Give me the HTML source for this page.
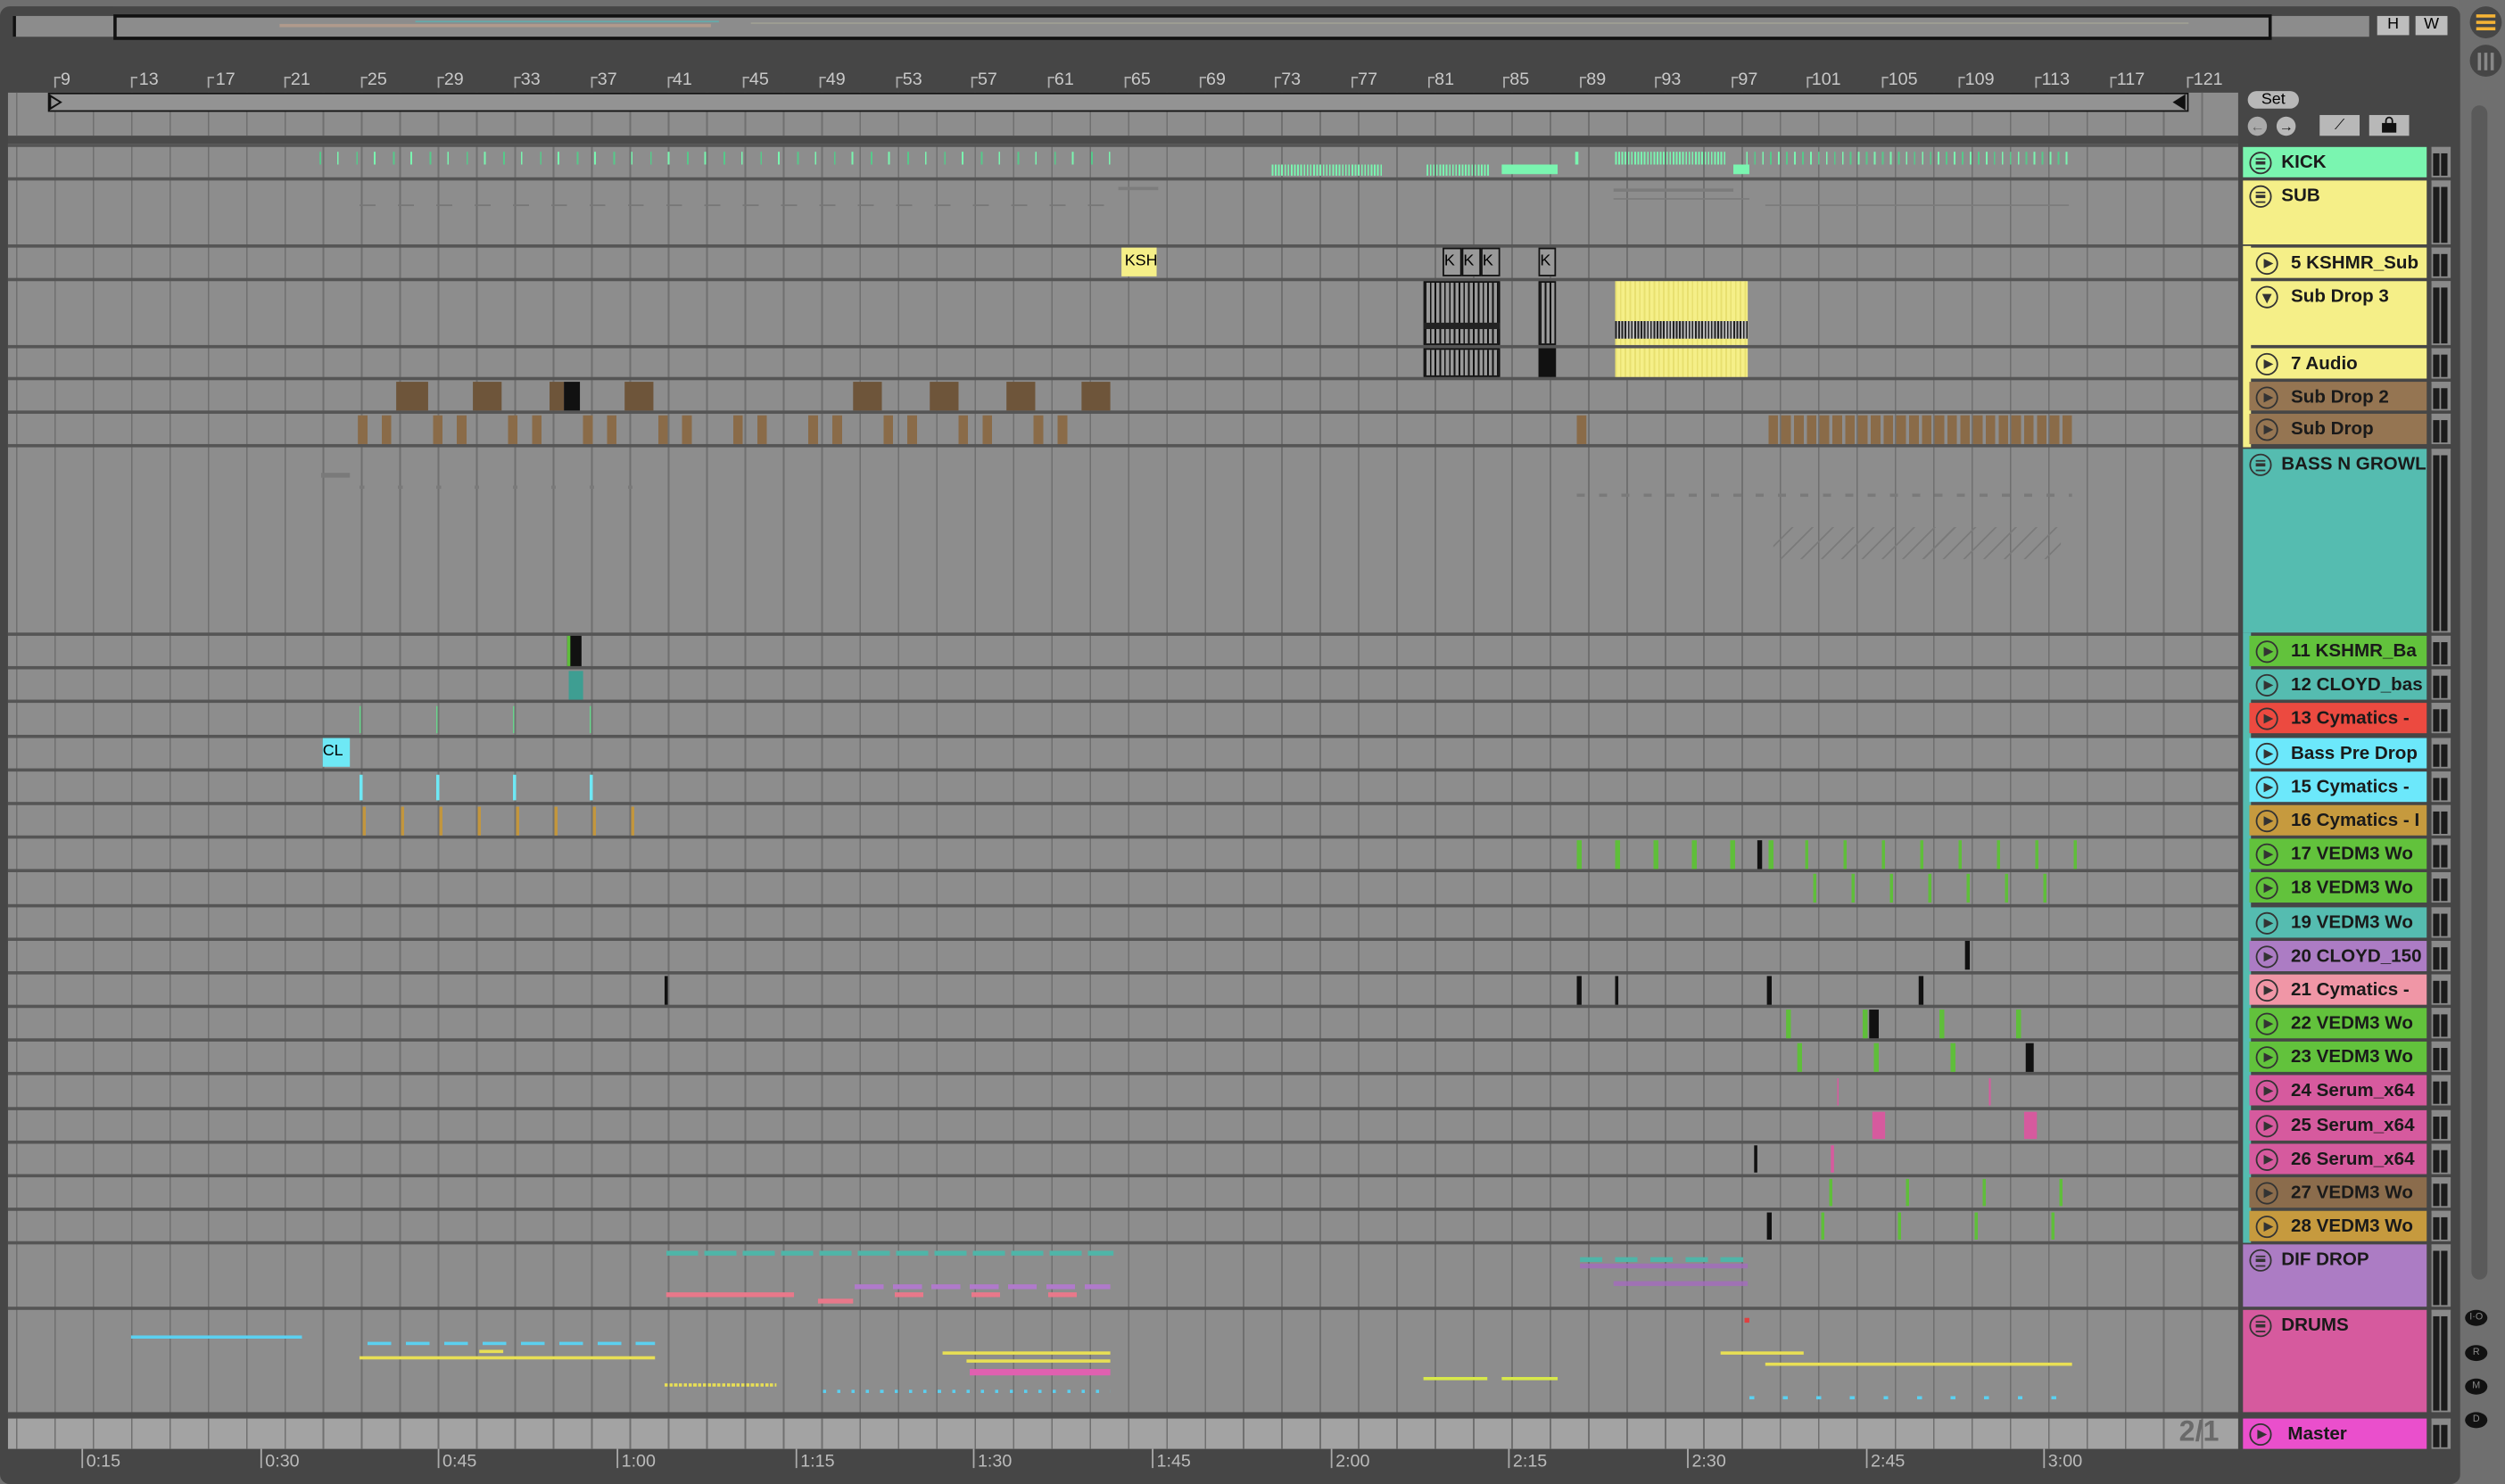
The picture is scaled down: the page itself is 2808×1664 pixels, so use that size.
<!DOCTYPE html>
<html><head><meta charset="utf-8"><style>
*{margin:0;padding:0;box-sizing:border-box}
html,body{width:2808px;height:1664px;overflow:hidden;background:#6f6f6f;font-family:"Liberation Sans",sans-serif}
#w{position:absolute;left:0;top:0;width:1568px;height:929px;transform:scale(1.7908,1.7912);transform-origin:0 0}
.a{position:absolute}
.panel{left:0;top:4px;width:1540px;height:925px;background:#464646;border-radius:6px}
.lane{position:absolute;left:5px;width:1396px;background-color:#8d8d8d;background-image:repeating-linear-gradient(90deg,transparent 0 5px,#707070 5px 6px,transparent 6px 24px)}
.sep{position:absolute;left:5px;width:1396px;height:2px;background:#555}
.hd{position:absolute;left:1408px;width:111px;font-size:11.5px;font-weight:bold;color:#1a1a1a;padding-left:26px;line-height:20px;white-space:nowrap;overflow:hidden}
.hd.g{left:1404px;width:115px;padding-left:24px}
.hd i{position:absolute;left:4px;top:3px;width:14px;height:14px;border:1.3px solid #333;border-radius:50%}
.hd i.p:after{content:"";position:absolute;left:4px;top:2.5px;border-left:6px solid #333;border-top:3.5px solid transparent;border-bottom:3.5px solid transparent}
.hd i.d:after{content:"";position:absolute;left:2.5px;top:4px;border-top:6px solid #333;border-left:3.5px solid transparent;border-right:3.5px solid transparent}
.hd i.m:after{content:"";position:absolute;left:3px;top:3px;width:6px;height:5px;border-top:1.3px solid #333;border-bottom:1.3px solid #333}
.hd i.m:before{content:"";position:absolute;left:3px;top:5.3px;width:6px;height:1.3px;background:#333}
.mt{position:absolute;left:1522px;width:12px;background:#8a8a8a;border-top:1px solid #8a8a8a}
.mt:before,.mt:after{content:"";position:absolute;top:3px;bottom:1px;width:4px;background:#1b1b1b}
.mt:before{left:1px}.mt:after{left:6px}
.c{position:absolute}
.rn{position:absolute;top:44px;font-size:11px;color:#c8c8c8}
.tk{position:absolute;top:48px;width:4px;height:7px;border-left:1px solid #aaa;border-top:1px solid #aaa}
.tl{position:absolute;top:909px;font-size:11px;color:#bbb}
.tt{position:absolute;top:907px;width:4px;height:12px;border-left:1px solid #aaa}
</style></head><body><div id="w">
<div class="a panel"></div>
<div class="a" style="left:1540px;top:0;width:28px;height:929px;background:#6f6f6f"></div>
<div class="a" style="left:1546px;top:4px;width:20px;height:20px;border-radius:50%;background:#464646"></div>
<div class="a" style="left:1550px;top:9px;width:12px;height:2px;background:#f5b335;box-shadow:0 4px 0 #f5b335,0 8px 0 #f5b335"></div>
<div class="a" style="left:1546px;top:28px;width:20px;height:20px;border-radius:50%;background:#464646"></div>
<div class="a" style="left:1551px;top:33px;width:2px;height:11px;background:#888;box-shadow:4px 0 0 #888,8px 0 0 #888"></div>
<div class="a" style="left:1547px;top:66px;width:10px;height:735px;background:#5a5a5a;border-radius:5px"></div>
<div class="a" style="left:1543px;top:820px;width:14px;height:10px;border-radius:50%;background:#111;color:#888;font-size:6px;text-align:center;line-height:10px">I·O</div>
<div class="a" style="left:1543px;top:842px;width:14px;height:10px;border-radius:50%;background:#111;color:#888;font-size:6px;text-align:center;line-height:10px">R</div>
<div class="a" style="left:1543px;top:863px;width:14px;height:10px;border-radius:50%;background:#111;color:#888;font-size:6px;text-align:center;line-height:10px">M</div>
<div class="a" style="left:1543px;top:884px;width:14px;height:10px;border-radius:50%;background:#111;color:#888;font-size:6px;text-align:center;line-height:10px">D</div>
<div class="a" style="left:8px;top:10px;width:1475px;height:13px;background:#8c8c8c"></div>
<div class="a" style="left:8px;top:10px;width:2px;height:13px;background:#111"></div>
<div class="a" style="left:71px;top:9px;width:1351px;height:16px;border:2px solid #111"></div>
<div class="a" style="left:175px;top:15px;width:270px;height:2px;background:#bfa08c;opacity:.7"></div>
<div class="a" style="left:260px;top:13px;width:190px;height:1px;background:#6aa"></div>
<div class="a" style="left:470px;top:14px;width:900px;height:1px;background:#aa9;opacity:.6"></div>
<div class="a" style="left:1488px;top:10px;width:20px;height:12px;background:#bdbdbd;font-size:10px;text-align:center;line-height:12px">H</div>
<div class="a" style="left:1512px;top:10px;width:20px;height:12px;background:#bdbdbd;font-size:10px;text-align:center;line-height:12px">W</div>
<div class="rn" style="left:38px">9</div><div class="tk" style="left:34px"></div>
<div class="rn" style="left:87px">13</div><div class="tk" style="left:82px"></div>
<div class="rn" style="left:135px">17</div><div class="tk" style="left:130px"></div>
<div class="rn" style="left:182px">21</div><div class="tk" style="left:178px"></div>
<div class="rn" style="left:230px">25</div><div class="tk" style="left:226px"></div>
<div class="rn" style="left:278px">29</div><div class="tk" style="left:274px"></div>
<div class="rn" style="left:326px">33</div><div class="tk" style="left:322px"></div>
<div class="rn" style="left:374px">37</div><div class="tk" style="left:370px"></div>
<div class="rn" style="left:421px">41</div><div class="tk" style="left:418px"></div>
<div class="rn" style="left:469px">45</div><div class="tk" style="left:465px"></div>
<div class="rn" style="left:517px">49</div><div class="tk" style="left:513px"></div>
<div class="rn" style="left:565px">53</div><div class="tk" style="left:561px"></div>
<div class="rn" style="left:612px">57</div><div class="tk" style="left:608px"></div>
<div class="rn" style="left:660px">61</div><div class="tk" style="left:656px"></div>
<div class="rn" style="left:708px">65</div><div class="tk" style="left:704px"></div>
<div class="rn" style="left:755px">69</div><div class="tk" style="left:751px"></div>
<div class="rn" style="left:802px">73</div><div class="tk" style="left:798px"></div>
<div class="rn" style="left:850px">77</div><div class="tk" style="left:846px"></div>
<div class="rn" style="left:898px">81</div><div class="tk" style="left:894px"></div>
<div class="rn" style="left:945px">85</div><div class="tk" style="left:941px"></div>
<div class="rn" style="left:993px">89</div><div class="tk" style="left:989px"></div>
<div class="rn" style="left:1040px">93</div><div class="tk" style="left:1036px"></div>
<div class="rn" style="left:1088px">97</div><div class="tk" style="left:1084px"></div>
<div class="rn" style="left:1134px">101</div><div class="tk" style="left:1131px"></div>
<div class="rn" style="left:1182px">105</div><div class="tk" style="left:1178px"></div>
<div class="rn" style="left:1230px">109</div><div class="tk" style="left:1226px"></div>
<div class="rn" style="left:1278px">113</div><div class="tk" style="left:1274px"></div>
<div class="rn" style="left:1325px">117</div><div class="tk" style="left:1321px"></div>
<div class="rn" style="left:1373px">121</div><div class="tk" style="left:1369px"></div>
<div class="lane" style="top:58px;height:27px"></div>
<div class="a" style="left:30px;top:58px;width:1340px;height:12px;background:#939393;border:1px solid #111"></div>
<div class="a" style="left:31px;top:59px;border-left:8px solid #111;border-top:5px solid transparent;border-bottom:5px solid transparent"></div>
<div class="a" style="left:32px;top:61px;border-left:5px solid #939393;border-top:3px solid transparent;border-bottom:3px solid transparent"></div>
<div class="a" style="left:1360px;top:59px;border-right:8px solid #111;border-top:5px solid transparent;border-bottom:5px solid transparent"></div>
<div class="a" style="left:5px;top:85px;width:1396px;height:5px;background:#4a4a4a"></div>
<div class="a" style="left:1407px;top:57px;width:32px;height:11px;border-radius:6px;background:#b8b8b8;font-size:10px;text-align:center;line-height:11px">Set</div>
<div class="a" style="left:1407px;top:73px;width:12px;height:12px;border-radius:50%;background:#aaa;font-size:9px;line-height:12px;text-align:center;color:#666">←</div>
<div class="a" style="left:1425px;top:73px;width:12px;height:12px;border-radius:50%;background:#b8b8b8;font-size:9px;line-height:12px;text-align:center;color:#111">→</div>
<div class="a" style="left:1452px;top:72px;width:25px;height:13px;background:#b8b8b8;font-size:9px;line-height:13px;text-align:center">⟋</div>
<div class="a" style="left:1483px;top:72px;width:25px;height:13px;background:#b8b8b8"></div>
<div class="a" style="left:1491px;top:77px;width:9px;height:6px;background:#111"></div>
<div class="a" style="left:1493px;top:73px;width:5px;height:6px;border:1.5px solid #111;border-radius:3px 3px 0 0"></div>
<div class="lane" style="top:90px;height:795px"></div>
<div class="a" style="left:1405px;top:90px;width:3px;height:795px;background:#464646"></div>
<div class="sep" style="top:90px"></div><div class="sep" style="top:111px"></div><div class="sep" style="top:153px"></div><div class="sep" style="top:174px"></div><div class="sep" style="top:216px"></div><div class="sep" style="top:236px"></div><div class="sep" style="top:257px"></div><div class="sep" style="top:278px"></div><div class="sep" style="top:396px"></div><div class="sep" style="top:417px"></div><div class="sep" style="top:438px"></div><div class="sep" style="top:460px"></div><div class="sep" style="top:481px"></div><div class="sep" style="top:502px"></div><div class="sep" style="top:523px"></div><div class="sep" style="top:544px"></div><div class="sep" style="top:566px"></div><div class="sep" style="top:587px"></div><div class="sep" style="top:608px"></div><div class="sep" style="top:629px"></div><div class="sep" style="top:650px"></div><div class="sep" style="top:671px"></div><div class="sep" style="top:693px"></div><div class="sep" style="top:714px"></div><div class="sep" style="top:735px"></div><div class="sep" style="top:756px"></div><div class="sep" style="top:777px"></div><div class="sep" style="top:818px"></div>
<div class="a" style="left:5px;top:884px;width:1396px;height:4px;background:#4a4a4a"></div>
<div class="lane" style="top:888px;height:19px;background-color:#a3a3a3"></div>
<div class="a" style="left:1364px;top:886px;font-size:18px;font-weight:bold;color:#6a6a6a">2/1</div>
<div class="c" style="left:200px;top:95px;width:500px;height:8px;background:repeating-linear-gradient(90deg,#56c98a 0 1px,transparent 1px 11px,#7af5b0 11px 12px,transparent 12px 23px)"></div>
<div class="c" style="left:796px;top:103px;width:70px;height:7px;background:repeating-linear-gradient(90deg,#7af5b0 0 1px,transparent 1px 2px)"></div>
<div class="c" style="left:893px;top:103px;width:40px;height:7px;background:repeating-linear-gradient(90deg,#7af5b0 0 1px,transparent 1px 2px)"></div>
<div class="c" style="left:940px;top:103px;width:35px;height:6px;background:#7af5b0"></div>
<div class="c" style="left:986px;top:95px;width:2px;height:8px;background:#7af5b0"></div>
<div class="c" style="left:1011px;top:95px;width:70px;height:8px;background:repeating-linear-gradient(90deg,#7af5b0 0 1px,transparent 1px 2px)"></div>
<div class="c" style="left:1085px;top:103px;width:10px;height:6px;background:#7af5b0"></div>
<div class="c" style="left:1093px;top:95px;width:205px;height:8px;background:repeating-linear-gradient(90deg,#7af5b0 0 1px,transparent 1px 5px,#56c98a 5px 6px,transparent 6px 10px)"></div>
<div class="c" style="left:225px;top:128px;width:470px;height:1px;background:repeating-linear-gradient(90deg,#777 0 10px,transparent 10px 24px)"></div>
<div class="c" style="left:1010px;top:118px;width:75px;height:2px;background:#7c7c7c"></div>
<div class="c" style="left:1010px;top:124px;width:85px;height:1px;background:#7c7c7c"></div>
<div class="c" style="left:1105px;top:128px;width:190px;height:1px;background:#7c7c7c"></div>
<div class="c" style="left:700px;top:117px;width:25px;height:2px;background:#7c7c7c"></div>
<div class="c" style="left:702px;top:155px;width:22px;height:18px;background:#f5ef88;font-size:10px;line-height:18px;padding-left:2px">KSH</div>
<div class="c" style="left:903px;top:155px;width:12px;height:18px;background:#999;border:1px solid #111;font-size:10px;line-height:16px">K</div>
<div class="c" style="left:915px;top:155px;width:12px;height:18px;background:#999;border:1px solid #111;font-size:10px;line-height:16px">K</div>
<div class="c" style="left:927px;top:155px;width:12px;height:18px;background:#999;border:1px solid #111;font-size:10px;line-height:16px">K</div>
<div class="c" style="left:963px;top:155px;width:11px;height:18px;background:#999;border:1px solid #111;font-size:10px;line-height:16px">K</div>
<div class="c" style="left:891px;top:176px;width:48px;height:40px;background:repeating-linear-gradient(90deg,#111 0 1px,#999 1px 3px);border:1px solid #111"></div>
<div class="c" style="left:891px;top:202px;width:48px;height:4px;background:#222"></div>
<div class="c" style="left:963px;top:176px;width:11px;height:40px;background:repeating-linear-gradient(90deg,#111 0 1px,#999 1px 3px);border:1px solid #111"></div>
<div class="c" style="left:1011px;top:176px;width:83px;height:40px;background:repeating-linear-gradient(90deg,#e8e070 0 1px,#f5ef88 1px 3px)"></div>
<div class="c" style="left:1011px;top:201px;width:83px;height:11px;background:repeating-linear-gradient(90deg,#222 0 1px,#bbb 1px 2px)"></div>
<div class="c" style="left:891px;top:218px;width:48px;height:18px;background:repeating-linear-gradient(90deg,#111 0 1px,#999 1px 3px);border:1px solid #111"></div>
<div class="c" style="left:963px;top:218px;width:11px;height:18px;background:#111"></div>
<div class="c" style="left:1011px;top:218px;width:83px;height:18px;background:repeating-linear-gradient(90deg,#e8e070 0 1px,#f5ef88 1px 3px)"></div>
<div class="c" style="left:248px;top:239px;width:20px;height:18px;background:#6e553a"></div>
<div class="c" style="left:296px;top:239px;width:18px;height:18px;background:#6e553a"></div>
<div class="c" style="left:344px;top:239px;width:9px;height:18px;background:#6e553a"></div>
<div class="c" style="left:353px;top:239px;width:10px;height:18px;background:#111"></div>
<div class="c" style="left:391px;top:239px;width:18px;height:18px;background:#6e553a"></div>
<div class="c" style="left:534px;top:239px;width:18px;height:18px;background:#6e553a"></div>
<div class="c" style="left:582px;top:239px;width:18px;height:18px;background:#6e553a"></div>
<div class="c" style="left:630px;top:239px;width:18px;height:18px;background:#6e553a"></div>
<div class="c" style="left:677px;top:239px;width:18px;height:18px;background:#6e553a"></div>
<div class="c" style="left:224px;top:260px;width:455px;height:18px;background:repeating-linear-gradient(90deg,#8a6b48 0 6px,transparent 6px 15px,#8a6b48 15px 21px,transparent 21px 47px)"></div>
<div class="c" style="left:987px;top:260px;width:6px;height:18px;background:#8a6b48"></div>
<div class="c" style="left:1107px;top:260px;width:190px;height:18px;background:repeating-linear-gradient(90deg,#8a6b48 0 6px,transparent 6px 8px)"></div>
<div class="c" style="left:201px;top:296px;width:18px;height:3px;background:#7a7a7a"></div>
<div class="c" style="left:987px;top:309px;width:310px;height:2px;background:repeating-linear-gradient(90deg,#7a7a7a 0 5px,transparent 5px 14px)"></div>
<div class="c" style="left:225px;top:304px;width:175px;height:2px;background:repeating-linear-gradient(90deg,#7a7a7a 0 3px,transparent 3px 24px)"></div>
<div class="c" style="left:1110px;top:330px;width:180px;height:20px;background:repeating-linear-gradient(135deg,transparent 0 8px,#7a7a7a 8px 9px)"></div>
<div class="c" style="left:355px;top:398px;width:9px;height:19px;background:#111;border-left:2px solid #5fbe3a"></div>
<div class="c" style="left:356px;top:420px;width:9px;height:18px;background:#3e9e92"></div>
<div class="c" style="left:225px;top:442px;width:150px;height:17px;background:repeating-linear-gradient(90deg,#6ad48d 0 1px,transparent 1px 48px)"></div>
<div class="c" style="left:202px;top:462px;width:17px;height:18px;background:#6ee8f5;font-size:10px;line-height:18px">CL</div>
<div class="c" style="left:225px;top:485px;width:150px;height:16px;background:repeating-linear-gradient(90deg,#6ee8f5 0 2px,transparent 2px 48px)"></div>
<div class="c" style="left:227px;top:505px;width:175px;height:18px;background:repeating-linear-gradient(90deg,#c2963e 0 2px,transparent 2px 24px)"></div>
<div class="c" style="left:987px;top:526px;width:125px;height:18px;background:repeating-linear-gradient(90deg,#5fbe3a 0 3px,transparent 3px 24px)"></div>
<div class="c" style="left:1100px;top:526px;width:3px;height:18px;background:#111"></div>
<div class="c" style="left:1130px;top:526px;width:170px;height:18px;background:repeating-linear-gradient(90deg,#5fbe3a 0 2px,transparent 2px 24px)"></div>
<div class="c" style="left:1135px;top:547px;width:165px;height:18px;background:repeating-linear-gradient(90deg,#5fbe3a 0 2px,transparent 2px 24px)"></div>
<div class="c" style="left:1230px;top:589px;width:3px;height:18px;background:#111"></div>
<div class="c" style="left:416px;top:611px;width:2px;height:18px;background:#111"></div>
<div class="c" style="left:987px;top:611px;width:3px;height:18px;background:#111"></div>
<div class="c" style="left:1011px;top:611px;width:2px;height:18px;background:#111"></div>
<div class="c" style="left:1106px;top:611px;width:3px;height:18px;background:#111"></div>
<div class="c" style="left:1201px;top:611px;width:3px;height:18px;background:#111"></div>
<div class="c" style="left:1118px;top:632px;width:150px;height:18px;background:repeating-linear-gradient(90deg,#5fbe3a 0 3px,transparent 3px 48px)"></div>
<div class="c" style="left:1170px;top:632px;width:6px;height:18px;background:#111"></div>
<div class="c" style="left:1125px;top:653px;width:100px;height:18px;background:repeating-linear-gradient(90deg,#5fbe3a 0 3px,transparent 3px 48px)"></div>
<div class="c" style="left:1268px;top:653px;width:5px;height:18px;background:#111"></div>
<div class="c" style="left:1150px;top:675px;width:100px;height:17px;background:repeating-linear-gradient(90deg,#d65a9e 0 1px,transparent 1px 95px)"></div>
<div class="c" style="left:1172px;top:696px;width:8px;height:17px;background:#d65a9e"></div>
<div class="c" style="left:1267px;top:696px;width:8px;height:17px;background:#d65a9e"></div>
<div class="c" style="left:1098px;top:717px;width:2px;height:17px;background:#111"></div>
<div class="c" style="left:1146px;top:717px;width:2px;height:17px;background:#d65a9e"></div>
<div class="c" style="left:1145px;top:738px;width:150px;height:17px;background:repeating-linear-gradient(90deg,#5fbe3a 0 2px,transparent 2px 48px)"></div>
<div class="c" style="left:1106px;top:759px;width:3px;height:17px;background:#111"></div>
<div class="c" style="left:1140px;top:759px;width:150px;height:17px;background:repeating-linear-gradient(90deg,#5fbe3a 0 2px,transparent 2px 48px)"></div>
<div class="c" style="left:417px;top:783px;width:280px;height:3px;background:repeating-linear-gradient(90deg,#4fb5a8 0 20px,transparent 20px 24px)"></div>
<div class="c" style="left:417px;top:809px;width:80px;height:3px;background:#e8788a"></div>
<div class="c" style="left:512px;top:813px;width:22px;height:3px;background:#e8788a"></div>
<div class="c" style="left:535px;top:804px;width:160px;height:3px;background:repeating-linear-gradient(90deg,#b07acb 0 18px,transparent 18px 24px)"></div>
<div class="c" style="left:560px;top:809px;width:115px;height:3px;background:repeating-linear-gradient(90deg,#e8788a 0 18px,transparent 18px 48px)"></div>
<div class="c" style="left:989px;top:787px;width:105px;height:3px;background:repeating-linear-gradient(90deg,#4fb5a8 0 14px,transparent 14px 22px)"></div>
<div class="c" style="left:989px;top:791px;width:105px;height:3px;background:#a46bbe;opacity:.8"></div>
<div class="c" style="left:1010px;top:802px;width:84px;height:3px;background:#a46bbe;opacity:.8"></div>
<div class="c" style="left:82px;top:836px;width:107px;height:2px;background:#5bd0f0"></div>
<div class="c" style="left:230px;top:840px;width:180px;height:2px;background:repeating-linear-gradient(90deg,#5bd0f0 0 15px,transparent 15px 24px)"></div>
<div class="c" style="left:225px;top:849px;width:185px;height:2px;background:#e8df55"></div>
<div class="c" style="left:300px;top:845px;width:15px;height:2px;background:#e8df55"></div>
<div class="c" style="left:416px;top:866px;width:70px;height:2px;background:repeating-linear-gradient(90deg,#e8df55 0 2px,transparent 2px 3px)"></div>
<div class="c" style="left:515px;top:870px;width:180px;height:2px;background:repeating-linear-gradient(90deg,#5bd0f0 0 2px,transparent 2px 9px)"></div>
<div class="c" style="left:590px;top:846px;width:105px;height:2px;background:#e8df55"></div>
<div class="c" style="left:605px;top:851px;width:90px;height:2px;background:#e8df55"></div>
<div class="c" style="left:607px;top:857px;width:88px;height:4px;background:#e060b0"></div>
<div class="c" style="left:891px;top:862px;width:40px;height:2px;background:#d8e84a"></div>
<div class="c" style="left:940px;top:862px;width:35px;height:2px;background:#d8e84a"></div>
<div class="c" style="left:1077px;top:846px;width:52px;height:2px;background:#e8df55"></div>
<div class="c" style="left:1105px;top:853px;width:192px;height:2px;background:#e8df55"></div>
<div class="c" style="left:1095px;top:874px;width:200px;height:2px;background:repeating-linear-gradient(90deg,#5bd0f0 0 3px,transparent 3px 21px)"></div>
<div class="c" style="left:1092px;top:825px;width:3px;height:3px;background:#e04040"></div>
<div class="a" style="left:1404px;top:154px;width:5px;height:126px;background:#f5ef88"></div>
<div class="a" style="left:1404px;top:396px;width:5px;height:382px;background:#55bcb0"></div>
<div class="hd g" style="top:92px;height:19px;background:#7af5b0"><i class="m"></i>KICK</div>
<div class="hd g" style="top:113px;height:40px;background:#f5ef88"><i class="m"></i>SUB</div>
<div class="hd" style="top:155px;height:19px;background:#f5ef88"><i class="p"></i>5 KSHMR_Sub</div>
<div class="hd" style="top:176px;height:40px;background:#f5ef88"><i class="d"></i>Sub Drop 3</div>
<div class="hd" style="top:218px;height:19px;background:#f5ef88"><i class="p"></i>7 Audio</div>
<div class="hd" style="top:239px;height:18px;background:#957552"><i class="p"></i>Sub Drop 2</div>
<div class="hd" style="top:259px;height:19px;background:#957552"><i class="p"></i>Sub Drop</div>
<div class="hd g" style="top:281px;height:115px;background:#55bcb0"><i class="m"></i>BASS N GROWL</div>
<div class="hd" style="top:398px;height:19px;background:#62c23c"><i class="p"></i>11 KSHMR_Ba</div>
<div class="hd" style="top:419px;height:19px;background:#55bcb0"><i class="p"></i>12 CLOYD_bas</div>
<div class="hd" style="top:440px;height:19px;background:#ec4a40"><i class="p"></i>13 Cymatics -</div>
<div class="hd" style="top:462px;height:19px;background:#6ce8fb"><i class="p"></i>Bass Pre Drop</div>
<div class="hd" style="top:483px;height:19px;background:#6ce8fb"><i class="p"></i>15 Cymatics -</div>
<div class="hd" style="top:504px;height:19px;background:#c69a3e"><i class="p"></i>16 Cymatics - I</div>
<div class="hd" style="top:525px;height:19px;background:#62c23c"><i class="p"></i>17 VEDM3 Wo</div>
<div class="hd" style="top:546px;height:19px;background:#62c23c"><i class="p"></i>18 VEDM3 Wo</div>
<div class="hd" style="top:568px;height:19px;background:#55bcb0"><i class="p"></i>19 VEDM3 Wo</div>
<div class="hd" style="top:589px;height:19px;background:#ac7cc4"><i class="p"></i>20 CLOYD_150</div>
<div class="hd" style="top:610px;height:19px;background:#f096a6"><i class="p"></i>21 Cymatics -</div>
<div class="hd" style="top:631px;height:19px;background:#62c23c"><i class="p"></i>22 VEDM3 Wo</div>
<div class="hd" style="top:652px;height:19px;background:#62c23c"><i class="p"></i>23 VEDM3 Wo</div>
<div class="hd" style="top:673px;height:19px;background:#d65a9e"><i class="p"></i>24 Serum_x64</div>
<div class="hd" style="top:695px;height:19px;background:#d65a9e"><i class="p"></i>25 Serum_x64</div>
<div class="hd" style="top:716px;height:19px;background:#d65a9e"><i class="p"></i>26 Serum_x64</div>
<div class="hd" style="top:737px;height:19px;background:#8b6c4c"><i class="p"></i>27 VEDM3 Wo</div>
<div class="hd" style="top:758px;height:19px;background:#c69a3e"><i class="p"></i>28 VEDM3 Wo</div>
<div class="hd g" style="top:779px;height:39px;background:#ac7cc4"><i class="m"></i>DIF DROP</div>
<div class="hd g" style="top:820px;height:64px;background:#d65a9e"><i class="m"></i>DRUMS</div>
<div class="hd g" style="top:888px;height:19px;background:#ea4fcc;padding-left:28px"><i class="p"></i>Master</div>
<div class="mt" style="top:92px;height:19px"></div><div class="mt" style="top:113px;height:40px"></div><div class="mt" style="top:155px;height:19px"></div><div class="mt" style="top:176px;height:40px"></div><div class="mt" style="top:218px;height:19px"></div><div class="mt" style="top:239px;height:18px"></div><div class="mt" style="top:259px;height:19px"></div><div class="mt" style="top:281px;height:115px"></div><div class="mt" style="top:398px;height:19px"></div><div class="mt" style="top:419px;height:19px"></div><div class="mt" style="top:440px;height:19px"></div><div class="mt" style="top:462px;height:19px"></div><div class="mt" style="top:483px;height:19px"></div><div class="mt" style="top:504px;height:19px"></div><div class="mt" style="top:525px;height:19px"></div><div class="mt" style="top:546px;height:19px"></div><div class="mt" style="top:568px;height:19px"></div><div class="mt" style="top:589px;height:19px"></div><div class="mt" style="top:610px;height:19px"></div><div class="mt" style="top:631px;height:19px"></div><div class="mt" style="top:652px;height:19px"></div><div class="mt" style="top:673px;height:19px"></div><div class="mt" style="top:695px;height:19px"></div><div class="mt" style="top:716px;height:19px"></div><div class="mt" style="top:737px;height:19px"></div><div class="mt" style="top:758px;height:19px"></div><div class="mt" style="top:779px;height:39px"></div><div class="mt" style="top:820px;height:64px"></div><div class="mt" style="top:888px;height:19px"></div>
<div class="tt" style="left:51px"></div><div class="tl" style="left:54px">0:15</div>
<div class="tt" style="left:163px"></div><div class="tl" style="left:166px">0:30</div>
<div class="tt" style="left:274px"></div><div class="tl" style="left:277px">0:45</div>
<div class="tt" style="left:386px"></div><div class="tl" style="left:389px">1:00</div>
<div class="tt" style="left:498px"></div><div class="tl" style="left:501px">1:15</div>
<div class="tt" style="left:609px"></div><div class="tl" style="left:612px">1:30</div>
<div class="tt" style="left:721px"></div><div class="tl" style="left:724px">1:45</div>
<div class="tt" style="left:833px"></div><div class="tl" style="left:836px">2:00</div>
<div class="tt" style="left:944px"></div><div class="tl" style="left:947px">2:15</div>
<div class="tt" style="left:1056px"></div><div class="tl" style="left:1059px">2:30</div>
<div class="tt" style="left:1168px"></div><div class="tl" style="left:1171px">2:45</div>
<div class="tt" style="left:1279px"></div><div class="tl" style="left:1282px">3:00</div>
</div></body></html>
